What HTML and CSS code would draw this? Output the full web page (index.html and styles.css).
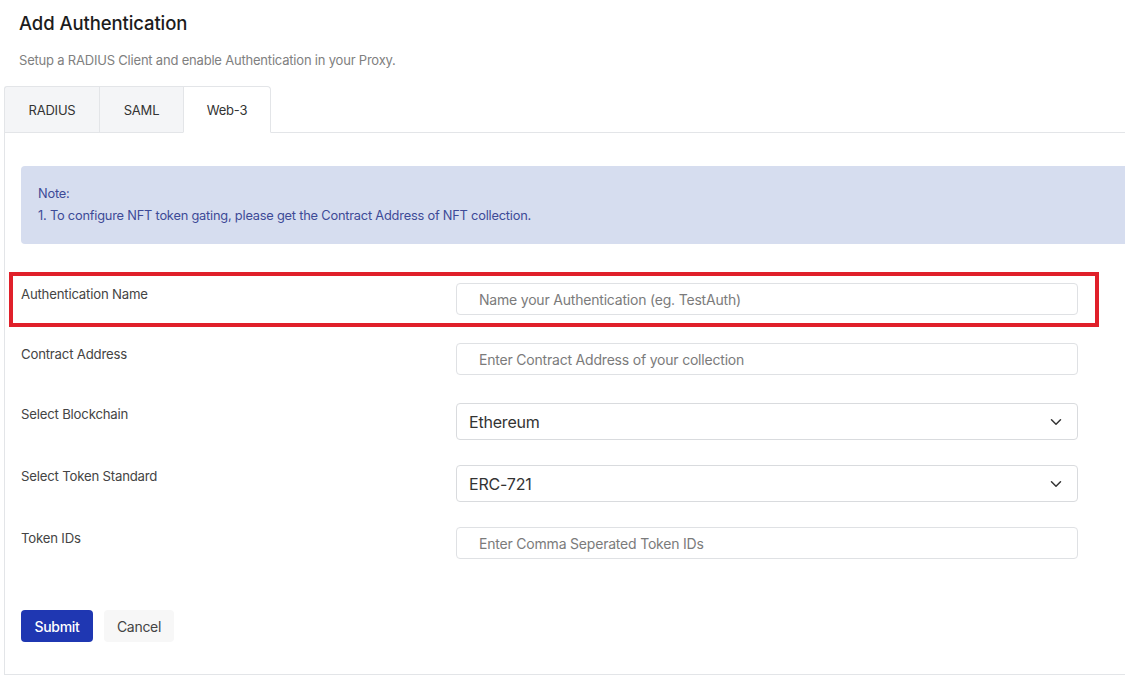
FILE: index.html
```html
<!DOCTYPE html>
<html lang="en">
<head>
<meta charset="utf-8">
<title>Add Authentication</title>
<link rel="stylesheet" href="styles.css">
</head>
<body>
<div class="page">
  <h1 class="title">Add Authentication</h1>
  <p class="subtitle">Setup a RADIUS Client and enable Authentication in your Proxy.</p>

  <div class="tabs">
    <div class="tab tab-radius">RADIUS</div>
    <div class="tab tab-saml">SAML</div>
    <div class="tab tab-web3 active">Web-3</div>
    <div class="tab-fill"></div>
  </div>

  <div class="panel">
    <div class="note">
      <div>Note:</div>
      <div>1. To configure NFT token gating, please get the Contract Address of NFT collection.</div>
    </div>

    <form class="form">
      <div class="row row-input highlighted">
        <label class="label">Authentication Name</label>
        <input class="field" type="text" placeholder="Name your Authentication (eg. TestAuth)">
        <div class="highlight"></div>
      </div>
      <div class="row row-input">
        <label class="label">Contract Address</label>
        <input class="field" type="text" placeholder="Enter Contract Address of your collection">
      </div>
      <div class="row row-select">
        <label class="label">Select Blockchain</label>
        <div class="select">
          <span>Ethereum</span>
          <svg class="chev" width="12" height="8" viewBox="0 0 12 8"><path d="M1.5 1.8 L6 6.2 L10.5 1.8" fill="none" stroke="#333" stroke-width="1.5" stroke-linecap="round" stroke-linejoin="round"/></svg>
        </div>
      </div>
      <div class="row row-select">
        <label class="label">Select Token Standard</label>
        <div class="select">
          <span>ERC-721</span>
          <svg class="chev" width="12" height="8" viewBox="0 0 12 8"><path d="M1.5 1.8 L6 6.2 L10.5 1.8" fill="none" stroke="#333" stroke-width="1.5" stroke-linecap="round" stroke-linejoin="round"/></svg>
        </div>
      </div>
      <div class="row row-last">
        <label class="label">Token IDs</label>
        <input class="field" type="text" placeholder="Enter Comma Seperated Token IDs">
      </div>
      <div class="actions">
        <button type="button" class="btn btn-primary">Submit</button>
        <button type="button" class="btn btn-cancel">Cancel</button>
      </div>
    </form>
  </div>
</div>
</body>
</html>
```
FILE: styles.css
```css
html, body {
  margin: 0;
  padding: 0;
  overflow: hidden;
  background: #ffffff;
}
body {
  font-family: Inter, "Noto Sans", "Liberation Sans", sans-serif;
  color: #333;
  width: 1125px;
  height: 677px;
}
.page {
  padding-left: 4px;
}
.title {
  margin: 11px 0 0 15px;
  font-size: 18.5px;
  line-height: 24px;
  font-weight: 500;
  color: #1c1c1c;
  letter-spacing: -0.1px;
}
.subtitle {
  margin: 17px 0 0 15px;
  font-size: 13px;
  line-height: 16px;
  color: #808080;
  letter-spacing: -0.2px;
}
.tabs {
  margin-top: 18px;
  display: flex;
  height: 47px;
}
.tab {
  box-sizing: border-box;
  height: 47px;
  display: flex;
  align-items: center;
  justify-content: center;
  font-size: 13px;
  color: #333;
  background: #f4f5f7;
  border: 1px solid #e3e5e8;
  border-right: none;
  letter-spacing: -0.2px;
}
.tab-radius { width: 95px; border-top-left-radius: 3px; }
.tab-saml { width: 84px; }
.tab-web3 { width: 88px; }
.tab.active {
  background: #fff;
  border-right: 1px solid #e3e5e8;
  border-bottom: 1px solid #fff;
  border-top-right-radius: 4px;
}
.tab-fill {
  flex: 1;
  border-bottom: 1px solid #e3e5e8;
}
.panel {
  box-sizing: border-box;
  width: 1160px;
  border-left: 1px solid #e3e5e8;
  border-bottom: 1px solid #e3e5e8;
  padding: 33px 0 32px 16px;
}
.note {
  background: #d6ddef;
  border-radius: 4px;
  padding: 17px 17px 17px 17px;
  font-size: 12.8px;
  line-height: 22px;
  color: #3d4a97;
  letter-spacing: -0.2px;
}
.form {
  margin: 39px 0 0 0;
}
.row {
  position: relative;
  display: flex;
  align-items: flex-start;
}
.row-input { margin-bottom: 28px; }
.row-select { margin-bottom: 25px; }
.row-last { margin-bottom: 51px; }
.label {
  width: 435px;
  flex: none;
  padding-top: 3px;
  font-size: 13.2px;
  line-height: 16px;
  color: #444;
  letter-spacing: -0.2px;
}
.field {
  box-sizing: border-box;
  width: 622px;
  height: 32px;
  margin: 0;
  border: 1px solid #dfe1e4;
  border-radius: 4px;
  padding: 0 0 0 22px;
  font-family: Inter, "Noto Sans", "Liberation Sans", sans-serif;
  font-size: 14px;
  color: #333;
  outline: none;
  letter-spacing: -0.2px;
}
.field::placeholder {
  color: #7b7b7b;
  opacity: 1;
}
.select {
  box-sizing: border-box;
  width: 622px;
  height: 37px;
  border: 1px solid #d9dbde;
  border-radius: 4px;
  padding: 0 15px 0 12px;
  display: flex;
  align-items: center;
  justify-content: space-between;
  font-size: 16px;
  color: #333;
  letter-spacing: -0.2px;
}
.chev {
  display: block;
}
.highlight {
  position: absolute;
  left: -12px;
  top: -11px;
  width: 1090px;
  height: 55px;
  box-sizing: border-box;
  border: 4px solid #e0202a;
  pointer-events: none;
}
.actions {
  display: flex;
  gap: 11px;
}
.btn {
  height: 32px;
  border: none;
  border-radius: 4px;
  font-family: Inter, "Noto Sans", "Liberation Sans", sans-serif;
  font-size: 14px;
  padding: 0;
  letter-spacing: -0.3px;
}
.btn-primary {
  width: 72px;
  background: #1f37b2;
  color: #fff;
  font-weight: 500;
}
.btn-cancel {
  width: 70px;
  background: #f7f7f7;
  color: #444;
}
```
